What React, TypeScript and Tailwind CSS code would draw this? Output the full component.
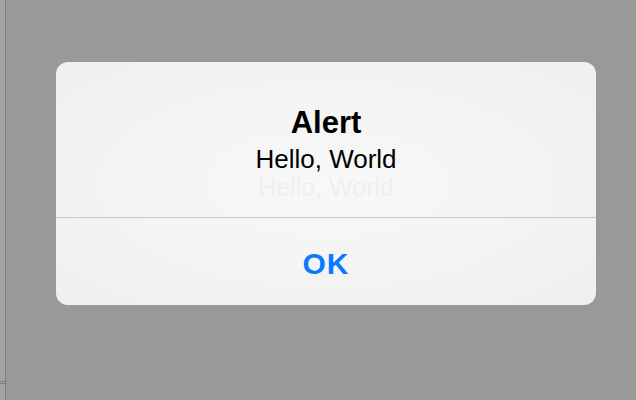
export default function App() {
  return (
    <div className="relative w-[636px] h-[400px] bg-[#999999] overflow-hidden font-['Liberation_Sans',Arial,sans-serif]">
      {/* left edge strip of the window behind */}
      <div className="absolute left-0 top-0 h-full w-[6px] bg-[#a3a3a3] border-r border-[#7d7d7d]" />
      <div className="absolute left-0 top-[381px] w-[6px] h-[3px] border-y border-[#7d7d7d]" />

      <div className="flex pt-[62px] pl-[56px]">
        <div className="w-[540px] h-[243px] rounded-[12px] bg-[radial-gradient(ellipse_at_center,#f8f8f8_0%,#f3f3f3_60%,#efefef_100%)] flex flex-col overflow-hidden">
          <div className="h-[155px] flex flex-col items-center pt-[42px]">
            <div className="text-[31px] leading-[38px] font-bold text-black">Alert</div>
            <div className="text-[26px] leading-[30px] text-black mt-[2px]">Hello, World</div>
            <div className="text-[25px] leading-[26px] text-[#efefef]">Hello, World</div>
          </div>
          <div className="h-px bg-[#c8c8c8]" />
          <div className="flex-1 flex items-center justify-center">
            <button className="text-[30px] font-bold text-[#0a7aff] tracking-[1px] mt-[3px]">OK</button>
          </div>
        </div>
      </div>
    </div>
  );
}
